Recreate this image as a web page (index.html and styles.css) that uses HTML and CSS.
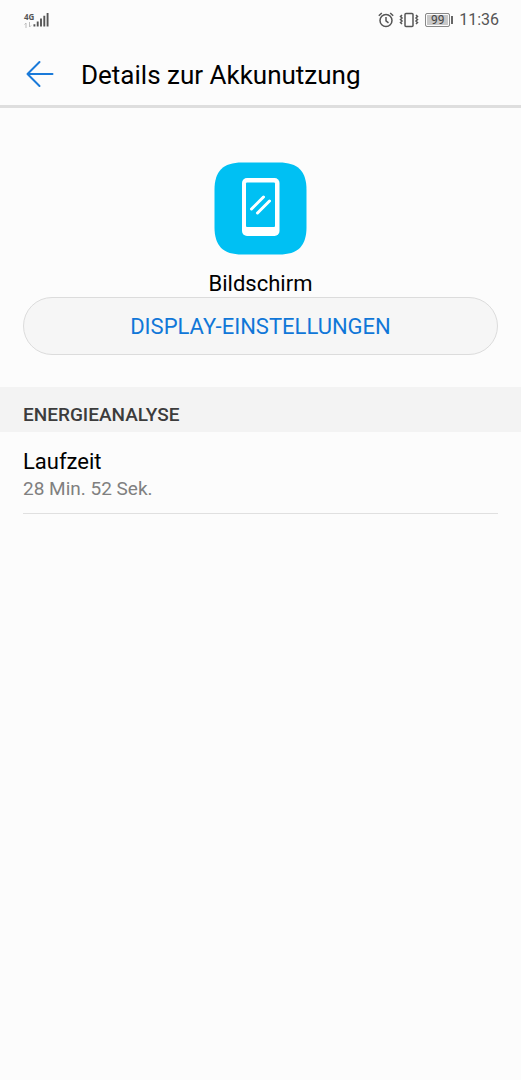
FILE: index.html
```html
<!DOCTYPE html>
<html lang="de">
<head>
    <meta charset="UTF-8">
    <meta name="viewport" content="width=device-width, initial-scale=1">
    <title>Details zur Akkunutzung</title>
    <link rel="stylesheet" href="styles.css">
</head>
<body>

<div class="status-bar">
    <div class="network">
        <div class="network-type">
            <span>4G</span>
            <svg width="8" height="6" viewBox="0 0 8 6"><path d="M2 6V1M0.5 2.5L2 1M5.5 0v5M7 3.5L5.5 5"/></svg>
        </div>
        <svg class="signal" width="16" height="16" viewBox="0 0 17 16">
            <path d="M1.5 12.5V15M5 9.5V15M8.5 6.5V15M12 3.5V15M15.5 0.5V15"/>
        </svg>
    </div>
    <div class="status-right">
        <svg class="status-icon" width="16" height="16" viewBox="0 0 16 16">
            <circle cx="8" cy="8.5" r="6"/>
            <path d="M8 5v3.8l2.5 2M0.8 3.8L3.8 1M12.2 1l3 2.8"/>
        </svg>
        <svg class="status-icon" width="20" height="16" viewBox="0 0 20 16">
            <rect x="6" y="1.5" width="8" height="13" rx="1"/>
            <path d="M3 3L1.500 4.500 3 6 1.500 7.500 3 9 1.500 10.500 3 12M17 3l1.500 1.500L17 6l1.500 1.500L17 9l1.500 1.500L17 12"/>
        </svg>
        <div class="battery"><span class="battery-level">99</span></div>
        <span class="clock">11:36</span>
    </div>
</div>

<header class="app-bar">
    <button class="back" aria-label="Zurück">
        <svg width="28" height="28" viewBox="0 0 28 28"><path d="M13.500 2L1.500 14l12 12M1.500 14h25"/></svg>
    </button>
    <h1>Details zur Akkunutzung</h1>
</header>

<main>
    <section class="app-info">
        <svg class="app-icon" width="93" height="93" viewBox="0 0 93 93">
            <path fill="#00c0f3" d="M28 0.5H65C84 0.5 92.5 9 92.5 28V65C92.5 84 84 92.5 65 92.5H28C9 92.5 0.5 84 0.5 65V28C0.5 9 9 0.5 28 0.5Z"/>
            <rect x="28" y="16" width="37.5" height="58" rx="5" fill="#fff"/>
            <rect x="32" y="20.5" width="29" height="44.5" rx="1" fill="#00c0f3"/>
            <path d="M37.5 47L49.5 35M43.500 51L55.500 39" stroke="#fff" stroke-width="3" stroke-linecap="round"/>
        </svg>
        <p class="app-name">Bildschirm</p>
        <button class="settings-button">DISPLAY-EINSTELLUNGEN</button>
    </section>

    <h2 class="section-title">ENERGIEANALYSE</h2>
    <div class="row">
        <p class="row-title">Laufzeit</p>
        <p class="row-value">28 Min. 52 Sek.</p>
    </div>
</main>

</body>
</html>
```
FILE: styles.css
```css
* {
    box-sizing: border-box;
}

body {
    margin: 0;
    min-height: 100vh;
    background: #fcfcfc;
    color: #000;
    font-family: Roboto, sans-serif;
}

h1, h2, p {
    margin: 0;
    font-weight: normal;
}

button {
    padding: 0;
    font-family: inherit;
    cursor: pointer;
}

svg {
    display: block;
    fill: none;
}

/* status bar */
.status-bar {
    display: flex;
    justify-content: space-between;
    align-items: center;
    height: 40px;
    padding: 0 22px 0 24px;
    color: #555;
}

.network {
    display: flex;
    align-items: flex-end;
}

.network-type {
    display: flex;
    flex-direction: column;
    gap: 1px;
    width: 9px;
    font-family: "Open Sans", sans-serif;
    font-size: 8px;
    font-weight: bold;
    line-height: 8px;
}

.network-type svg {
    stroke: #bbb;
}

.signal {
    stroke: #555;
    stroke-width: 2;
}

.status-right {
    display: flex;
    align-items: center;
    gap: 5px;
}

.status-icon {
    stroke: #555;
    stroke-width: 1.5;
}

.battery {
    display: flex;
    align-items: center;
    gap: 1px;
    margin: 0 1px;
}

.battery::after {
    content: "";
    width: 2px;
    height: 8px;
    background: #666;
}

.battery-level {
    width: 25px;
    height: 14px;
    border: 1px solid #888;
    border-radius: 2px;
    box-shadow: inset 0 0 0 1px #fcfcfc;
    background: #c8c8c8;
    color: #444;
    font-size: 12px;
    line-height: 12px;
    text-align: center;
}

.clock {
    font-size: 16px;
    line-height: 20px;
}

/* title bar */
.app-bar {
    display: flex;
    align-items: center;
    gap: 27px;
    height: 68px;
    padding: 2px 26px 0;
    border-bottom: 3px solid #dedede;
}

.back {
    border: none;
    background: none;
}

.back svg {
    stroke: #1a7ad9;
    stroke-width: 2;
    stroke-linecap: round;
    stroke-linejoin: round;
}

.app-bar h1 {
    padding-top: 2px;
    font-size: 26px;
    line-height: 32px;
}

/* app details */
.app-info {
    display: flex;
    flex-direction: column;
    align-items: center;
    padding: 54px 23px 32px;
}

.app-name {
    margin-top: 16px;
    font-size: 22px;
    line-height: 26px;
}

.settings-button {
    width: 100%;
    height: 58px;
    border: 1px solid #dcdcdc;
    border-radius: 30px;
    background: #f6f6f6;
    color: #1077d8;
    font-size: 22px;
}

.section-title {
    padding: 16px 23px 5px;
    background: #f3f3f3;
    color: #3c3c3c;
    font-size: 19px;
    font-weight: 500;
    line-height: 24px;
}

.row {
    margin: 0 23px;
    padding: 16px 0 12px;
    border-bottom: 1px solid #e0e0e0;
}

.row-title {
    font-size: 22px;
    line-height: 28px;
}

.row-value {
    color: #808080;
    font-size: 19px;
    line-height: 25px;
}
```
